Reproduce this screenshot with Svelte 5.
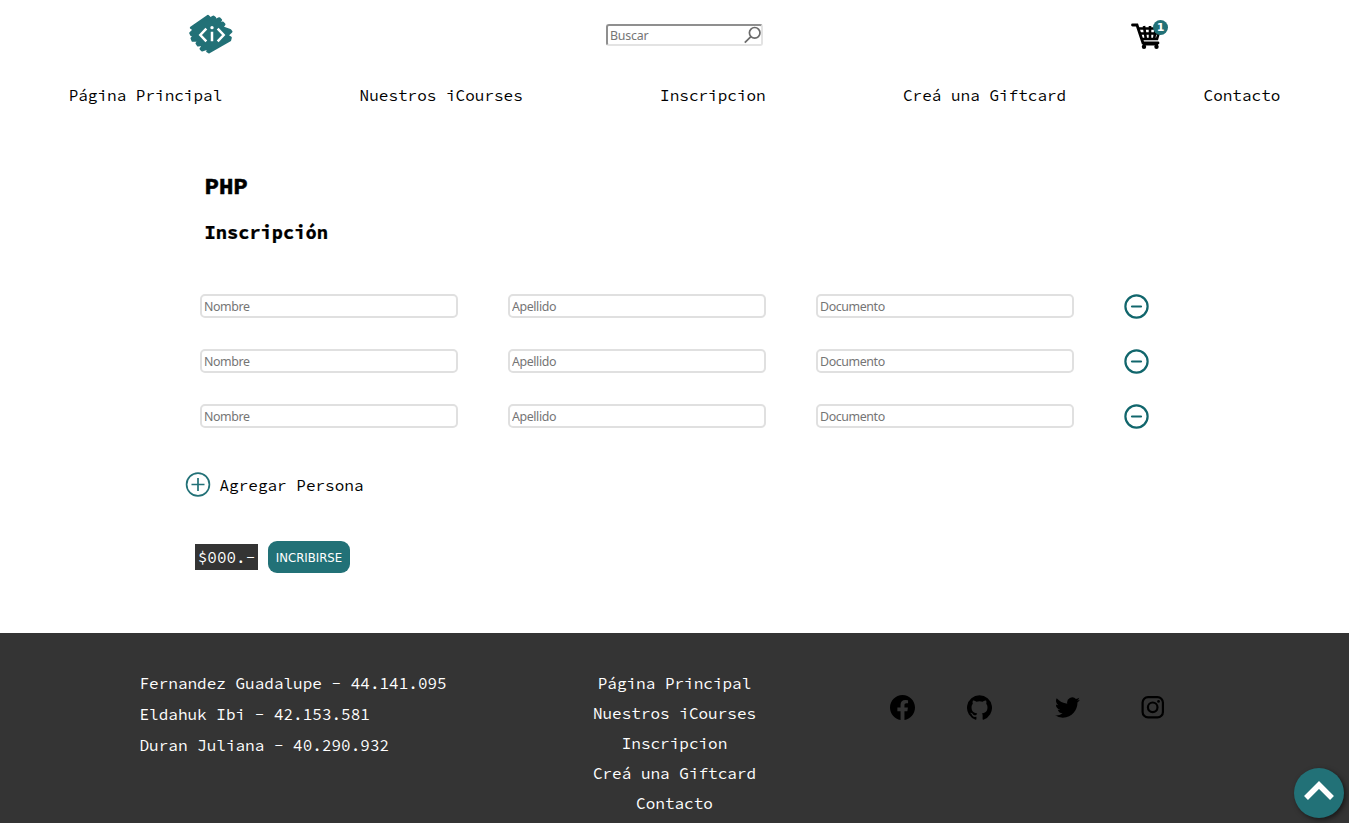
<script>
  const links = ['Página Principal', 'Nuestros iCourses', 'Inscripcion', 'Creá una Giftcard', 'Contacto'];
  const team = ['Fernandez Guadalupe - 44.141.095', 'Eldahuk Ibi - 42.153.581', 'Duran Juliana - 40.290.932'];
  const rows = [1, 2, 3];
</script>

<div class="page">
  <header>
    <div class="top">
      <svg class="logo" width="46" height="42" viewBox="24 24 138 126">
        <path d="M33 68 84 33 88 37 83 44 100 35 105 39 98 49 118 40 123 45 113 56 128 53 133 58 127 67 150 75 154 80 142 91 152 98 150 106 87 142 82 139 92 127 66 136 62 131 72 119 54 121 50 115 59 106 38 107 35 100 46 89 34 90 31 84 42 74z" fill="#227177" stroke="#227177" stroke-width="7" stroke-linejoin="round" />
        <g stroke="#fff" stroke-width="7.5" fill="none">
          <path d="M79 71 61 90l18 19M113 71l18 19-18 19M96 80v29" />
          <circle cx="96" cy="68" r="5" fill="#fff" stroke="none" />
        </g>
      </svg>
      <div class="search">
        <input type="text" placeholder="Buscar" />
        <svg width="18" height="18" viewBox="0 0 18 18" fill="none" stroke="#6b6b6b" stroke-width="1.7">
          <circle cx="10.7" cy="6.8" r="5.3" /><path d="M6.9 10.6.8 16.7" />
        </svg>
      </div>
      <div class="cart">
        <svg width="31" height="28" viewBox="0 0 31 28" fill="none" stroke="#000">
          <path d="M1.5 3H6l6 18h15" stroke-width="2.8" stroke-linecap="round" />
          <path d="M7 6.5h22l-3 10.500H11M8 11.500h20M13 4l2 14M19 4v14M25 4l-2 14" stroke-width="2.6" />
          <circle cx="13" cy="24.800" r="2.200" fill="#000" stroke="none" /><circle cx="25.500" cy="24.800" r="2.200" fill="#000" stroke="none" />
          <path d="M12 22.500h15" stroke-width="2" />
        </svg>
        <span>1</span>
      </div>
    </div>
    <nav>{#each links as l}<a href="#top">{l}</a>{/each}</nav>
  </header>

  <main>
    <h2>PHP</h2>
    <h3>Inscripción</h3>
    <div class="people">
      {#each rows as r (r)}
        <div class="row">
          <input type="text" placeholder="Nombre" />
          <input type="text" placeholder="Apellido" />
          <input type="text" placeholder="Documento" />
          <svg width="26" height="26" viewBox="0 0 26 26" fill="none" stroke="#11666c" stroke-width="2.2">
            <circle cx="13.5" cy="13.5" r="11.1" /><path d="M9 13.500h9" stroke-linecap="round" />
          </svg>
        </div>
      {/each}
    </div>
    <div class="add">
      <svg width="26" height="26" viewBox="0 0 26 26" fill="none" stroke="#227177" stroke-width="1.7">
        <circle cx="13" cy="13.500" r="11.400" /><path d="M6.500 13.500h13M13 7v13" />
      </svg>
      <span>Agregar Persona</span>
    </div>
    <div class="pay"><span class="price">$000.-</span><button>INCRIBIRSE</button></div>
  </main>

  <footer>
    <div class="team">{#each team as t}<p>{t}</p>{/each}</div>
    <div class="links">{#each links as l}<a href="#top">{l}</a>{/each}</div>
    <div class="social">
      <svg viewBox="0 0 24 24"><path d="M24 12.07C24 5.4 18.63 0 12 0S0 5.4 0 12.07C0 18.1 4.39 23.1 10.13 24v-8.44H7.08v-3.49h3.05V9.41c0-3.02 1.79-4.69 4.53-4.69 1.31 0 2.68.24 2.68.24v2.97h-1.51c-1.49 0-1.95.93-1.95 1.88v2.26h3.32l-.53 3.49h-2.79V24C19.61 23.1 24 18.1 24 12.07z" /></svg>
      <svg viewBox="0 0 24 24"><path d="M12 .3a12 12 0 0 0-3.8 23.38c.6.12.83-.26.83-.57v-2.23c-3.34.73-4.04-1.42-4.04-1.42-.55-1.39-1.34-1.76-1.34-1.76-1.08-.74.09-.73.09-.73 1.2.09 1.84 1.24 1.84 1.24 1.07 1.83 2.8 1.3 3.49 1 .1-.78.42-1.31.76-1.61-2.66-.3-5.47-1.33-5.47-5.93 0-1.31.47-2.38 1.24-3.22-.14-.3-.54-1.52.1-3.18 0 0 1.01-.32 3.3 1.23a11.5 11.5 0 0 1 6.02 0c2.28-1.55 3.29-1.23 3.29-1.23.64 1.66.24 2.88.12 3.18a4.65 4.65 0 0 1 1.23 3.22c0 4.61-2.81 5.63-5.48 5.92.42.36.81 1.1.81 2.22v3.29c0 .32.21.7.82.58A12 12 0 0 0 12 .3" /></svg>
      <svg viewBox="0 0 24 24"><path d="M23.95 4.57a10 10 0 0 1-2.82.78 4.96 4.96 0 0 0 2.16-2.73c-.95.56-2 .96-3.13 1.19a4.92 4.92 0 0 0-8.38 4.48C7.69 8.1 4.07 6.13 1.64 3.16a4.93 4.93 0 0 0 1.52 6.57 4.9 4.9 0 0 1-2.23-.61v.06a4.92 4.92 0 0 0 3.95 4.83 5 5 0 0 1-2.21.08 4.94 4.94 0 0 0 4.6 3.42A9.87 9.87 0 0 1 0 19.54a14 14 0 0 0 7.55 2.21c9.05 0 14-7.5 14-13.98 0-.21 0-.42-.02-.63a9.94 9.94 0 0 0 2.42-2.57z" /></svg>
      <svg viewBox="0 0 24 24" fill="none" stroke="#000" stroke-width="2.1"><rect x="2.500" y="2" width="19.500" height="19.500" rx="5.200" /><circle cx="12.200" cy="11.800" r="4.600" /><circle cx="17.800" cy="6.200" r="1.300" fill="#000" stroke="none" /></svg>
    </div>
  </footer>
  <a class="up" href="#top" aria-label="Subir">
    <svg width="32" height="22" viewBox="0 0 32 22" fill="none" stroke="#fff" stroke-width="5.5"><path d="M3 18 16 5l13 13" /></svg>
  </a>
</div>

<style>
  :global(body) { margin: 0; overflow: hidden; }
  * { box-sizing: border-box; }
  .page { height: 823px; overflow: hidden; background: #fff; color: #000; font: 16px/24px "Source Code Pro", "Liberation Mono", monospace; }
  a { color: inherit; text-decoration: none; white-space: nowrap; }
  svg { display: block; flex: none; }
  .top { height: 70px; display: grid; grid-template-columns: 606px 1fr 218px; align-items: center; }
  .logo { margin: -2px 0 0 188px; }
  .search { position: relative; width: 157px; height: 22px; }
  .search svg { position: absolute; right: 1px; top: 2px; }
  input { display: block; font: 12.4px/18px "Noto Sans", sans-serif; letter-spacing: -.4px; border: 2px solid #e0e0e0; border-radius: 5px; padding: 1px 2px; outline: 0; background: #fff; }
  input::placeholder { color: #757575; opacity: 1; }
  .search input { width: 157px; height: 22px; padding: 0 2px; letter-spacing: -.2px; border-color: #8f8f8f #e3e3e3 #e3e3e3 #8f8f8f; border-radius: 3px; }
  .cart { position: relative; width: 40px; height: 30px; }
  .cart svg { margin-top: 2px; }
  .cart span { position: absolute; left: 22px; top: 0; width: 15px; height: 15px; border-radius: 50%; background: #227177; color: #fff; font: bold 11px/16px "DejaVu Sans", sans-serif; text-align: center; }
  nav { display: flex; justify-content: space-around; height: 50px; align-items: center; }
  main { height: 513px; padding-top: 53px; }
  h2 { margin: 0 0 0 204.5px; font-size: 24px; line-height: 26px; font-weight: 700; -webkit-text-stroke: .5px #000; }
  h3 { margin: 22px 0 0 204.5px; font-size: 18.72px; line-height: 24px; font-weight: 700; -webkit-text-stroke: .2px #000; }
  .people { padding: 48px 0 0 200px; display: grid; row-gap: 29px; }
  .row { display: flex; gap: 50px; height: 26px; align-items: center; }
  .row input { width: 258px; height: 24px; }
  .row svg { margin-left: -1px; }
  .add { display: flex; align-items: center; gap: 8.5px; margin: 42px 0 0 185px; height: 26px; }
  .add span { padding-top: 2px; }
  .pay { display: flex; align-items: center; gap: 10px; margin: 44px 0 0 195px; height: 32px; }
  .price { background: #343434; color: #fff; width: 63px; height: 26px; line-height: 26px; text-align: center; }
  button { width: 82px; height: 32px; padding: 0; border: 0; border-radius: 9px; background: #227177; color: #fff; font: 13px "DejaVu Sans Condensed", "DejaVu Sans", sans-serif; white-space: nowrap; }
  footer { height: 190px; background: #343434; color: #fff; display: grid; grid-template-columns: 500px 349px 500px; }
  .team { padding: 35px 0 0 139.5px; }
  .team p { margin: 0; line-height: 31px; white-space: nowrap; }
  .links { padding-top: 35px; display: flex; flex-direction: column; align-items: center; }
  .links a { line-height: 30px; }
  .social { padding: 62px 0 0 41px; display: grid; grid-template-columns: 77px 88px 85px 26px; height: 88px; }
  .social svg { width: 25px; height: 25px; }
  .up { position: fixed; left: 1294px; top: 768px; width: 50px; height: 50px; border-radius: 50%; background: #227177; box-shadow: 2px 2px 5px #0008; display: grid; place-items: center; }
  .up svg { margin-top: -5px; }
</style>
